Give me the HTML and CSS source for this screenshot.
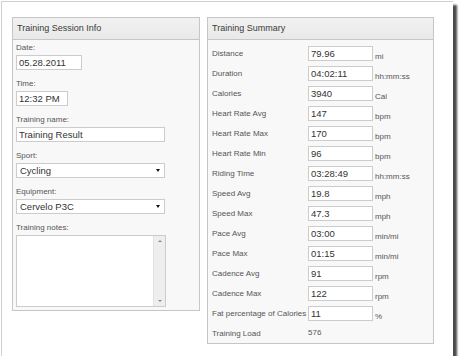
FILE: index.html
```html
<!DOCTYPE html>
<html>
<head>
    <meta charset="UTF-8">
    <link rel="stylesheet" href="styles.css">
</head>
<body>
    <div class="frame">
        <div class="panel session">
            <div class="panel-head">Training Session Info</div>
            <div class="panel-body">
                <div class="field">
                    <div class="label">Date:</div>
                    <input class="input w-date" type="text" value="05.28.2011">
                </div>
                <div class="field">
                    <div class="label">Time:</div>
                    <input class="input w-time" type="text" value="12:32 PM">
                </div>
                <div class="field">
                    <div class="label">Training name:</div>
                    <input class="input w-full" type="text" value="Training Result">
                </div>
                <div class="field">
                    <div class="label">Sport:</div>
                    <div class="select w-full"><span>Cycling</span><span class="arrow"></span></div>
                </div>
                <div class="field">
                    <div class="label">Equipment:</div>
                    <div class="select w-full"><span>Cervelo P3C</span><span class="arrow"></span></div>
                </div>
                <div class="field last">
                    <div class="label">Training notes:</div>
                    <div class="notes">
                        <div class="notes-text"></div>
                        <div class="scrollbar">
                            <span class="sb-up"></span>
                            <span class="sb-down"></span>
                        </div>
                    </div>
                </div>
            </div>
        </div>

        <div class="panel summary">
            <div class="panel-head">Training Summary</div>
            <div class="panel-body">
                <div class="row"><span class="label">Distance</span><input class="input val" type="text" value="79.96"><span class="unit">mi</span></div>
                <div class="row"><span class="label">Duration</span><input class="input val" type="text" value="04:02:11"><span class="unit">hh:mm:ss</span></div>
                <div class="row"><span class="label">Calories</span><input class="input val" type="text" value="3940"><span class="unit">Cal</span></div>
                <div class="row"><span class="label">Heart Rate Avg</span><input class="input val" type="text" value="147"><span class="unit">bpm</span></div>
                <div class="row"><span class="label">Heart Rate Max</span><input class="input val" type="text" value="170"><span class="unit">bpm</span></div>
                <div class="row"><span class="label">Heart Rate Min</span><input class="input val" type="text" value="96"><span class="unit">bpm</span></div>
                <div class="row"><span class="label">Riding Time</span><input class="input val" type="text" value="03:28:49"><span class="unit">hh:mm:ss</span></div>
                <div class="row"><span class="label">Speed Avg</span><input class="input val" type="text" value="19.8"><span class="unit">mph</span></div>
                <div class="row"><span class="label">Speed Max</span><input class="input val" type="text" value="47.3"><span class="unit">mph</span></div>
                <div class="row"><span class="label">Pace Avg</span><input class="input val" type="text" value="03:00"><span class="unit">min/mi</span></div>
                <div class="row"><span class="label">Pace Max</span><input class="input val" type="text" value="01:15"><span class="unit">min/mi</span></div>
                <div class="row"><span class="label">Cadence Avg</span><input class="input val" type="text" value="91"><span class="unit">rpm</span></div>
                <div class="row"><span class="label">Cadence Max</span><input class="input val" type="text" value="122"><span class="unit">rpm</span></div>
                <div class="row"><span class="label">Fat percentage of Calories</span><input class="input val" type="text" value="11"><span class="unit">%</span></div>
                <div class="row last"><span class="label">Training Load</span><span class="plain">576</span></div>
            </div>
        </div>
    </div>
</body>
</html>
```

FILE: styles.css
```css
body {
    margin: 0;
    background: #ffffff;
    font-family: "Liberation Sans", Arial, sans-serif;
    overflow: hidden;
}

.frame {
    margin: 1px 0 0 1px;
    width: 452px;
    height: 355px;
    border-top: 1px solid #cfcfcf;
    border-left: 1px solid #cfcfcf;
    background: #ffffff;
    box-shadow: 4px 4px 2px #4a4a4a;
    box-sizing: border-box;
    padding: 15px 0 0 10px;
    display: flex;
    align-items: flex-start;
    gap: 7px;
}

.panel {
    border: 1px solid #c6c6c6;
    background: #f8f8f8;
    box-sizing: border-box;
}

.session {
    width: 188px;
}

.summary {
    width: 227px;
}

.panel-head {
    height: 21px;
    line-height: 21px;
    padding-left: 4px;
    font-size: 9px;
    color: #3a3a3a;
    background: linear-gradient(to bottom, #f1f1f1, #e9e9e9);
    border-bottom: 1px solid #c6c6c6;
}

.label {
    font-size: 8px;
    color: #555555;
}

.input {
    display: block;
    margin: 0;
    height: 15px;
    box-sizing: border-box;
    border: 1px solid #cccccc;
    background: #ffffff;
    padding: 0 2px;
    font-family: "Liberation Sans", Arial, sans-serif;
    font-size: 9.5px;
    color: #333333;
    outline: none;
}

/* left column */

.session .panel-body {
    padding: 3px 0 3px 3px;
}

.field {
    margin-bottom: 9px;
}

.field.last {
    margin-bottom: 0;
}

.field .label {
    height: 10px;
    line-height: 10px;
    margin-bottom: 2px;
}

.w-date {
    width: 66px;
}

.w-time {
    width: 52px;
}

.w-full {
    width: 149px;
}

.select {
    height: 15px;
    box-sizing: border-box;
    border: 1px solid #cccccc;
    background: #ffffff;
    padding: 0 3px 0 3px;
    display: flex;
    align-items: center;
    justify-content: space-between;
    font-size: 9.5px;
    color: #333333;
}

.arrow {
    width: 0;
    height: 0;
    border-left: 2.5px solid transparent;
    border-right: 2.5px solid transparent;
    border-top: 3px solid #111111;
    margin-right: 1px;
}

.notes {
    width: 150px;
    height: 72px;
    box-sizing: border-box;
    border: 1px solid #cccccc;
    background: #ffffff;
    display: flex;
}

.notes-text {
    flex: 1;
}

.scrollbar {
    width: 11px;
    background: #eeeeee;
    border-left: 1px solid #e2e2e2;
    display: flex;
    flex-direction: column;
    justify-content: space-between;
    align-items: center;
    padding: 4px 0;
}

.sb-up {
    width: 0;
    height: 0;
    border-left: 2px solid transparent;
    border-right: 2px solid transparent;
    border-bottom: 2px solid #8a8a8a;
}

.sb-down {
    width: 0;
    height: 0;
    border-left: 2px solid transparent;
    border-right: 2px solid transparent;
    border-top: 2px solid #8a8a8a;
}

/* right column */

.summary .panel-body {
    padding: 6px 0 2px 4px;
}

.row {
    display: flex;
    align-items: flex-start;
    height: 15px;
    margin-bottom: 5px;
}

.row.last {
    margin-bottom: 0;
}

.row .label {
    width: 96px;
    line-height: 15px;
    white-space: nowrap;
}

.val {
    width: 65px;
}

.unit {
    align-self: flex-end;
    margin-left: 2px;
    line-height: 10px;
    margin-bottom: -1px;
    font-size: 8px;
    color: #555555;
}

.plain {
    line-height: 13px;
    font-size: 8px;
    color: #555555;
}
```
